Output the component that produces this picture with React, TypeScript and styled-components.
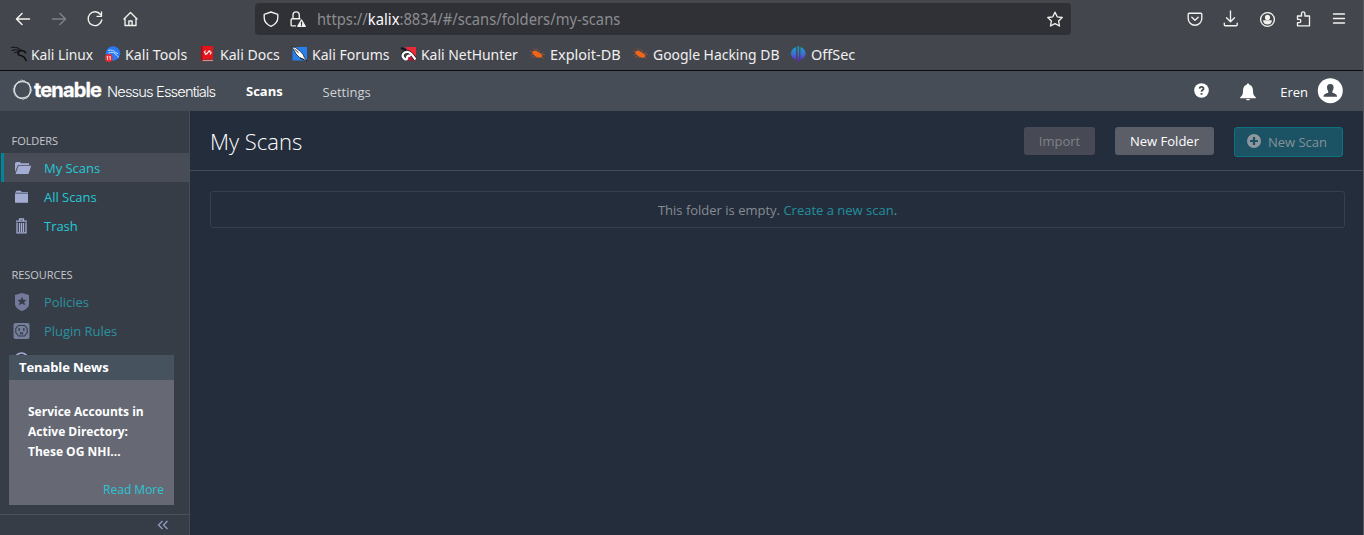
import React from "react";
import styled, { createGlobalStyle, css } from "styled-components";

const ui = `"Open Sans", "Noto Sans", sans-serif`;
const chrome = `"Noto Sans", "Open Sans", sans-serif`;

const Global = createGlobalStyle`
  *, *::before, *::after { box-sizing: border-box; }
  body { margin: 0; background: #242d3c; overflow: hidden; }
  button { font: inherit; margin: 0; }
`;

const Window = styled.div`
  width: 1364px;
  height: 535px;
  display: flex;
  flex-direction: column;
  border-right: 1px solid #55595e;
  background: #242d3c;
  font-family: ${ui};
  font-size: 13px;
  overflow: hidden;
`;

const Toolbar = styled.div`
  flex: none;
  height: 38px;
  display: flex;
  align-items: center;
  background: #44464d;
  padding: 0 13px 0 12px;
`;

const NavIcons = styled.div`
  width: 243px;
  display: flex;
  gap: 14px;
`;

const Glyph = styled.svg<{ $dim?: boolean }>`
  display: block;
  flex: none;
  fill: none;
  stroke: ${(p) => (p.$dim ? "#7e8085" : "#f2f2ee")};
  stroke-width: 1.35;
  stroke-linecap: round;
  stroke-linejoin: round;
`;

const AddressBar = styled.div`
  width: 816px;
  height: 32px;
  border-radius: 4px;
  background: #303136;
  display: flex;
  align-items: center;
  padding: 0 5px;
`;

const Address = styled.div`
  flex: 1;
  margin-left: 7px;
  font: 15.5px/32px ${chrome};
  color: #8b8c8f;
  white-space: nowrap;
  transform: scaleX(0.952);
  transform-origin: left;
  b { font-weight: 400; color: #fbfbfe; }
`;

const Actions = styled.div`
  margin-left: auto;
  display: flex;
  gap: 14px;
`;

const Bookmarks = styled.div`
  flex: none;
  height: 33px;
  display: flex;
  align-items: flex-start;
  background: #44464d;
  border-bottom: 1px solid #0c0c0e;
  padding-left: 10px;
`;

const Bookmark = styled.div<{ $w: number }>`
  width: ${(p) => p.$w}px;
  height: 32px;
  display: flex;
  align-items: center;
  gap: 4px;
  font: 15.3px/32px ${chrome};
  color: #f0f0f0;
  white-space: nowrap;
  svg { flex: none; width: 17px; }
`;

const BookmarkLabel = styled.span<{ $fit: number }>`
  display: block;
  transform: scaleX(${(p) => p.$fit});
  transform-origin: left;
`;

const AppHeader = styled.header`
  flex: none;
  height: 40px;
  display: flex;
  align-items: center;
  background: #464d56;
  border-bottom: 1px solid #424a53;
  padding: 0 20px 0 12px;
  color: #fff;
`;

const Brand = styled.div`
  width: 234px;
  display: flex;
  align-items: center;
  white-space: nowrap;
  svg { margin-bottom: 2px; overflow: visible; }
`;

const BrandName = styled.span`
  width: 73px;
  margin-left: 1px;
  padding-bottom: 2px;
  font: 700 20px/36px "Inter", sans-serif;
  letter-spacing: -0.85px;
  -webkit-text-stroke: 0.3px #fff;
`;

const Product = styled.span`
  padding-top: 2px;
  font: 300 14.7px/36px "Inter", sans-serif;
  letter-spacing: -0.88px;
`;

const Tab = styled.a<{ $active?: boolean; $w: number }>`
  width: ${(p) => p.$w}px;
  font-weight: ${(p) => (p.$active ? 700 : 400)};
  color: ${(p) => (p.$active ? "#fff" : "#d0d2d5")};
  padding-top: ${(p) => (p.$active ? 0 : 2)}px;
`;

const Account = styled.div`
  margin-left: auto;
  display: flex;
  align-items: center;
  svg { display: block; }
`;

const Bell = styled.svg`
  margin: 2px 0 0 31px;
`;

const UserName = styled.span`
  margin: 2px 9px 0 24.500px;
`;

const Body = styled.div`
  flex: 1;
  min-height: 0;
  display: flex;
`;

const Sidebar = styled.aside`
  position: relative;
  width: 190px;
  flex: none;
  background: #373d47;
  border-right: 1px solid #474e58;
  padding-top: 18px;
`;

const SectionTitle = styled.h3`
  margin: 0;
  height: 24px;
  padding-left: 11.5px;
  font-size: 11px;
  line-height: 23px;
  font-weight: 400;
  letter-spacing: -0.05px;
  color: #c6c8cb;
`;

const Item = styled.a<{ $active?: boolean; $muted?: boolean }>`
  height: 29px;
  display: flex;
  align-items: center;
  padding-left: 14px;
  letter-spacing: -0.03px;
  color: ${(p) => (p.$muted ? "#2a929f" : "#23c9d8")};
  ${(p) =>
    p.$active &&
    css`
      background: #484c56;
      border-left: 3px solid #00869b;
      margin-left: 1px;
      padding-left: 10px;
    `}
  svg { flex: none; width: 18px; margin-right: 12px; overflow: visible; }
`;

const Section = styled.section<{ $gap?: number }>`
  margin-top: ${(p) => p.$gap ?? 0}px;
`;

const News = styled.article`
  position: absolute;
  left: 9px;
  top: 244px;
  width: 165px;
  height: 150px;
  background: #666974;
  color: #fff;
`;

const NewsTitle = styled.h4`
  margin: 0;
  height: 25px;
  padding-left: 10px;
  background: #47525f;
  font-size: 13px;
  letter-spacing: -0.1px;
  line-height: 25px;
`;

const NewsBody = styled.p`
  margin: 0;
  padding: 22px 19px 0;
  font-size: 12px;
  font-weight: 700;
  line-height: 20px;
`;

const ReadMore = styled.a`
  display: block;
  margin-top: 18px;
  padding-right: 10px;
  text-align: right;
  font-size: 12px;
  line-height: 20px;
  color: #2bc5d5;
`;

const Collapse = styled.div`
  position: absolute;
  left: 0;
  right: 0;
  bottom: 0;
  height: 21px;
  border-top: 1px solid #4b505b;
  background: #373d47;
  display: flex;
  justify-content: flex-end;
  align-items: center;
  padding-right: 20px;
`;

const Main = styled.main`
  flex: 1;
  display: flex;
  flex-direction: column;
`;

const PageHeader = styled.div`
  height: 60px;
  display: flex;
  align-items: flex-start;
  border-bottom: 1px solid #424b55;
  padding: 16px 20px 0 20px;
`;

const Title = styled.h1`
  margin: -1px auto 0 0;
  font-size: 22px;
  line-height: 30px;
  font-weight: 300;
  color: #fff;
`;

const Button = styled.button<{ $kind: "disabled" | "plain" | "primary"; $w: number }>`
  width: ${(p) => p.$w}px;
  height: 28px;
  margin-left: 20px;
  padding: 0;
  border: 0;
  border-radius: 3px;
  display: flex;
  align-items: center;
  justify-content: center;
  gap: 7px;
  background: ${(p) => (p.$kind === "plain" ? "#5c5e67" : "#474a54")};
  color: ${(p) => (p.$kind === "plain" ? "#fff" : "#7e8188")};
  ${(p) =>
    p.$kind === "primary" &&
    css`
      height: 30px;
      padding-right: 3px;
      background: #1c5364;
      border: 1px solid #0d7280;
      color: #85919a;
      svg { margin-bottom: 2px; }
    `}
`;

const Empty = styled.div`
  height: 37px;
  margin: 20px 18px 0 20px;
  border: 1px solid #373f4b;
  border-radius: 3px;
  line-height: 36px;
  text-align: center;
  color: #878b92;
  a { color: #238f9c; }
`;

const lilac = "#a3acd3";
const lilacDim = "#74799a";

const bookmarkIcons: Record<string, React.ReactNode> = {
  linux: (
    <svg width="17" height="16" viewBox="0 0 17 16" fill="none" stroke="#0e0f12" strokeLinecap="round" strokeLinejoin="round">
      <path d="M1.500 1.500C5 .8 9 1.500 11 4.300M2 4.500c3-1.300 6-.9 8.500.4M4.500 6.800c1.500-1 3-1 4-.8" strokeWidth="1" />
      <path d="M10.500 4.300l3.700.9 1.300 1.500M10 4.800C7 6.500 7.500 9 10.500 9.500c3 .5 4.500 1.800 5.500 5" strokeWidth="1.600" />
    </svg>
  ),
  tools: (
    <svg width="17" height="16" viewBox="0 0 17 16">
      <circle cx="9" cy="7.500" r="7.200" fill="#2979f2" />
      <path d="M4 4.500c3-1 6.500 0 8 2.300l2 .8M4.500 7c2.500-1 5-.6 6.500 0M10.500 7c.3 2 3 1.500 4 4.500" stroke="#b9dcff" strokeWidth="1" fill="none" />
      <circle cx="4.800" cy="12" r="3.900" fill="#e92b36" />
      <path d="M3.600 10.200v3.600M2.700 10.700h.9M6.200 10.200v3.600M5.300 10.700h.9" stroke="#fff" strokeWidth=".9" />
    </svg>
  ),
  docs: (
    <svg width="17" height="16" viewBox="0 0 17 16">
      <path d="M2.500 0H14v13.500H2.500z" fill="#e5141b" />
      <path d="M2 13.500h12V15.500H2z" fill="#9a3038" />
      <path d="M3 14.500h11" stroke="#c9b6b8" strokeWidth=".8" />
      <path d="M2 0h1.500v15H2z" fill="#a80c16" />
      <path d="M6.500 4.500L5.300 6.300c0 1.500 3 .5 3.200 2M11 8.500l1.200-1.800c0-1.500-3-.5-3.200-2M6.200 8.800l5-4.500" stroke="#fff" strokeWidth="1.050" fill="none" />
    </svg>
  ),
  forums: (
    <svg width="17" height="16" viewBox="0 0 17 16">
      <path d="M1.500 1H16v13.500H1.500z" fill="#2880ee" />
      <path d="M.7.800l3.800.7 5 4 3 3.500.7 2.300 2.800 3.700-3.800-1.800-3.700-1.700L5 8 3.200 4.500z" fill="#fff" stroke="#15181f" strokeWidth=".8" />
      <path d="M3.500 3l4 3.800M9 12l4 1.700" stroke="#15181f" strokeWidth=".9" fill="none" />
    </svg>
  ),
  hunter: (
    <svg width="17" height="16" viewBox="0 0 17 16">
      <path d="M5 1h11v12z" fill="#ed2939" />
      <path d="M7 9h6l3 5.500H7z" fill="#b31533" />
      <path d="M1 2l5 2" stroke="#15161b" strokeWidth="2.200" fill="none" />
      <path d="M3.800 12.500C1 9.500 3.500 5.500 7.300 5.800 11 6 12.500 9.500 15.500 13.500" stroke="#15161b" strokeWidth="3.600" fill="none" />
      <path d="M4 12.500C.9 9.500 3.500 5.600 7.300 5.800 11 6 12.500 9.500 15.500 13.500M3.800 12c1 2 3.500 1.600 3.300 0-.2-2 1.600-3 3.300-1.800" stroke="#fff" strokeWidth="2.300" fill="none" />
    </svg>
  ),
  roach: (
    <svg width="17" height="16" viewBox="0 0 17 16">
      <path d="M3.200 5.700C5 3.800 8.500 4.600 11 7.300c2 1 3 2.700 1.800 4-2.500 1-5.300.2-7.300-1.700C4 8.300 3 7.200 3.200 5.700z" fill="#f36516" />
      <path d="M4.500 2.500l2.500 2M8 2.500L8 4.800M10 6.500l.8-2.500M11.500 7.500l3-.8M13 8.800l3-.4M.8 4.500l2.700 1.500M1.500 9l3.500-.7M3 11.500l3-1.500M8 11l-1.500 1.500M12.500 11l2.500 1.600" stroke="#a2583a" strokeWidth=".7" fill="none" />
    </svg>
  ),
  offsec: (
    <svg width="17" height="16" viewBox="0 0 17 16">
      <defs><linearGradient id="offsec" gradientUnits="userSpaceOnUse" x1="0" y1="0" x2="0" y2="15.500"><stop offset="0" stopColor="#12a5bd" /><stop offset=".5" stopColor="#3a72d4" /><stop offset="1" stopColor="#6420c6" /></linearGradient></defs>
      <path d="M6.200 1v13C3 13 1 10.500 1 7.500S3 2 6.200 1zM10.400 1v13c3.200-1 5.200-3.500 5.200-6.500s-2-5.500-5.200-6.500zM7.500.3h1.700v15.200H7.500z" fill="url(#offsec)" />
    </svg>
  ),
};

const bookmarks = [
  { icon: "linux", label: "Kali Linux", w: 94, fit: 0.9 },
  { icon: "tools", label: "Kali Tools", w: 95, fit: 0.927 },
  { icon: "docs", label: "Kali Docs", w: 92, fit: 0.918 },
  { icon: "forums", label: "Kali Forums", w: 109, fit: 0.918 },
  { icon: "hunter", label: "Kali NetHunter", w: 129, fit: 0.91 },
  { icon: "roach", label: "Exploit-DB", w: 103, fit: 0.945 },
  { icon: "roach", label: "Google Hacking DB", w: 158, fit: 0.91 },
  { icon: "offsec", label: "OffSec", w: 80, fit: 0.945 },
];

const G = ({ children, dim }: { children: React.ReactNode; dim?: boolean }) => (
  <Glyph width="22" height="22" viewBox="0 0 22 22" $dim={dim}>{children}</Glyph>
);

const Rings = () => (
  <svg width="21" height="22" viewBox="0 0 21 22" fill="none" stroke="#e6e8ea" strokeWidth=".8" strokeLinejoin="round">
    <path d="M6.500 2.300L16.500 3.700 19.700 11.500 14.800 19.300 5.500 18.700 1.200 10.300z" />
    <path d="M9.700 1L17.500 5.200 18.700 14.200 11.500 20.500 3.200 16.700 2.200 6.800z" />
    <path d="M12.500 1.800L19 8.200 16.800 17.300 8 19.500 1.700 13.500 4.200 4.500z" />
  </svg>
);

export default function App() {
  return (
    <>
      <Global />
      <Window>
        <Toolbar>
          <NavIcons>
            <G><path d="M17.500 11H4.800M10 5.500L4.500 11l5.500 5.500" strokeWidth="1.500" /></G>
            <G dim><path d="M4.500 11h12.700M12 5.500l5.500 5.500-5.500 5.500" strokeWidth="1.500" /></G>
            <G><path d="M16.500 6.500A6.900 6.900 0 1 0 17.800 12M17.500 3.800v4.500H13" /></G>
            <G><path d="M4 11l6.500-6.500 6.500 6.500M5 10.300v7.200h11v-7.200M8.900 17.300V13h3.200v4.300" /></G>
          </NavIcons>
          <AddressBar>
            <G><path d="M11 4l6.800 2.300v3.500c0 3.600-3.200 7-6.800 8.500-3.600-1.500-6.800-4.900-6.800-8.500V6.300z" /></G>
            <Glyph width="28" height="22" viewBox="0 0 28 22">
              <path d="M13.500 17.800H10a.9.900 0 0 1-.9-.9V12a1.300 1.300 0 0 1 1.300-1.300h7.600M11 10.500V7a3 3 0 0 1 6.300 0v3.500" />
              <path d="M19.500 12l3.700 6.300h-7.400z" fill="#f2f2ee" />
              <path d="M19.500 14v2.300M19.500 17.600v.1" stroke="#303136" strokeWidth="1.200" />
            </Glyph>
            <Address>https://<b>kalix</b>:8834/#/scans/folders/my-scans</Address>
            <G><path d="M11 4.200l2.200 4.600 5 .7-3.600 3.500.9 5-4.500-2.400L6.500 18l.9-5-3.600-3.500 5-.7z" /></G>
          </AddressBar>
          <Actions>
            <G><path d="M5.200 5.200h11.600a1 1 0 0 1 1 1v4.300a6.800 6.800 0 0 1-13.600 0V6.200a1 1 0 0 1 1-1zM7.800 9.200l3.200 3 3.200-3" /></G>
            <G><path d="M10.500 3v10.500M6.500 9.700l4 4 4-4M4.300 15.200v1.500a1 1 0 0 0 1 1h10.900a1 1 0 0 0 1-1v-1.500" /></G>
            <G><circle cx="11.500" cy="11.500" r="6.900" /><circle cx="11.500" cy="9.400" r="1.900" fill="#f2f2ee" /><path d="M7.800 13h7.400c-.5 1.800-1.900 2.700-3.700 2.700S8.300 14.800 7.800 13z" fill="#f2f2ee" /></G>
            <G><path d="M5.500 8h4V5.600a1.700 1.700 0 0 1 3.400 0V8h4.600v9.800h-12v-3.200h1.700a1.650 1.650 0 0 0 0-3.300H5.500z" /></G>
            <G><path d="M5.500 6h11M5.500 10.500h11M5.500 15h11" /></G>
          </Actions>
        </Toolbar>
        <Bookmarks>
          {bookmarks.map((b) => (
            <Bookmark key={b.label} $w={b.w}>{bookmarkIcons[b.icon]}<BookmarkLabel $fit={b.fit}>{b.label}</BookmarkLabel></Bookmark>
          ))}
        </Bookmarks>
        <AppHeader>
          <Brand><Rings /><BrandName>tenable</BrandName><Product>Nessus Essentials</Product></Brand>
          <Tab $active $w={76.5}>Scans</Tab>
          <Tab $w={80}>Settings</Tab>
          <Account>
            <svg width="15" height="15" viewBox="0 0 15 15">
              <circle cx="7.500" cy="7.500" r="7.300" fill="#fff" />
              <path d="M5.500 5.600c.1-2.200 4-2.200 4 .1 0 1.500-2 1.300-2 3M7.500 10.100v1.700" stroke="#464d56" strokeWidth="1.800" fill="none" />
            </svg>
            <Bell width="16" height="18" viewBox="0 0 16 18">
              <path d="M8 0.500c.9 0 1.300.6 1.300 1.300C12 2.500 13 4.800 13 8c0 3.500 1 4.800 2.800 6.300v.9H.2v-.9C2 12.800 3 11.500 3 8c0-3.200 1-5.500 3.700-6.200C6.700 1.100 7.100.5 8 .5zM6 16h4c-.3 1.800-3.700 1.800-4 0z" fill="#fff" />
            </Bell>
            <UserName>Eren</UserName>
            <svg width="26" height="26" viewBox="0 0 26 26">
              <circle cx="13.300" cy="12.700" r="12.500" fill="#fff" />
              <path d="M13.300 6c2.300 0 3.500 1.500 3.300 3.800-.1 1.600-.7 2.500-1.200 3.200v1.800c1.700.7 4.700 1.200 4.700 4H6.500c0-2.800 3-3.300 4.700-4V13c-.5-.7-1.100-1.600-1.200-3.200C9.800 7.500 11 6 13.300 6z" fill="#464d56" />
            </svg>
          </Account>
        </AppHeader>
        <Body>
          <Sidebar>
            <Section>
              <SectionTitle>FOLDERS</SectionTitle>
              <Item $active>
                <svg height="14" viewBox="0 0 18 14" fill={lilac}><path d="M1 11V2.500L2 1h4l1 1.300h8V4H4z" /><path d="M4.500 4.800H17.200L14.500 13H1.500z" /></svg>
                My Scans
              </Item>
              <Item>
                <svg height="14" viewBox="0 0 18 14" fill={lilac}><path d="M1 2.800l1.500-2h4L8 2h6v.8zM1 3.600h13v9.200H1z" /></svg>
                All Scans
              </Item>
              <Item>
                <svg height="16" viewBox="0 0 18 16" fill="none" stroke={lilac} strokeWidth="1.300"><path d="M2 3.200h11M5.500 3V1h4v2M3 4.500v10.300h9V4.500M5.500 5v9M7.500 5v9M9.500 5v9" /></svg>
                Trash
              </Item>
            </Section>
            <Section $gap={23}>
              <SectionTitle>RESOURCES</SectionTitle>
              <Item $muted>
                <svg height="18" viewBox="0 0 18 18"><path d="M8 0l7 2v9c0 3-3 5.500-7 7-4-1.500-7-4-7-7V2z" fill={lilacDim} /><path d="M8 3.800l1.300 3 3.200.2L10.200 9.100l.8 3.200-3-1.700-3 1.700.8-3.200L3.500 7l3.200-.2z" fill="#373d47" /></svg>
                Policies
              </Item>
              <Item $muted>
                <svg height="16" viewBox="0 0 18 16"><rect x="-.5" width="16" height="16" rx="2" fill="#74809b" /><path d="M4.500 2.500h6l2.700 3v4l-2.700 3.500h-6L1.800 9.500v-4z" fill="none" stroke="#373d47" strokeWidth="1.100" /><path d="M5.200 5v3M9.800 5v3M6.500 11.500v-1.700h2v1.700" stroke="#373d47" strokeWidth="1.300" fill="none" /></svg>
                Plugin Rules
              </Item>
              <Item $muted>
                <svg height="15" viewBox="0 0 18 15"><circle cx="7.500" cy="7.500" r="6.500" fill="none" stroke={lilac} strokeWidth="1.500" /></svg>
              </Item>
            </Section>
            <News>
              <NewsTitle>Tenable News</NewsTitle>
              <NewsBody>Service Accounts in Active Directory: These OG NHI...</NewsBody>
              <ReadMore>Read More</ReadMore>
            </News>
            <Collapse>
              <svg width="12" height="10" viewBox="0 0 12 10" fill="none" stroke="#929dc4" strokeWidth="1.300"><path d="M5.500 1l-4 4 4 4M10.500 1l-4 4 4 4" /></svg>
            </Collapse>
          </Sidebar>
          <Main>
            <PageHeader>
              <Title>My Scans</Title>
              <Button $kind="disabled" $w={71}>Import</Button>
              <Button $kind="plain" $w={99}>New Folder</Button>
              <Button $kind="primary" $w={109}>
                <svg width="14" height="14" viewBox="0 0 14 14"><circle cx="7" cy="7" r="7" fill="#8f969d" /><path d="M7 3v8M3 7h8" stroke="#1c5364" strokeWidth="2.200" /></svg>
                New Scan
              </Button>
            </PageHeader>
            <Empty>This folder is empty. <a>Create a new scan</a>.</Empty>
          </Main>
        </Body>
      </Window>
    </>
  );
}
